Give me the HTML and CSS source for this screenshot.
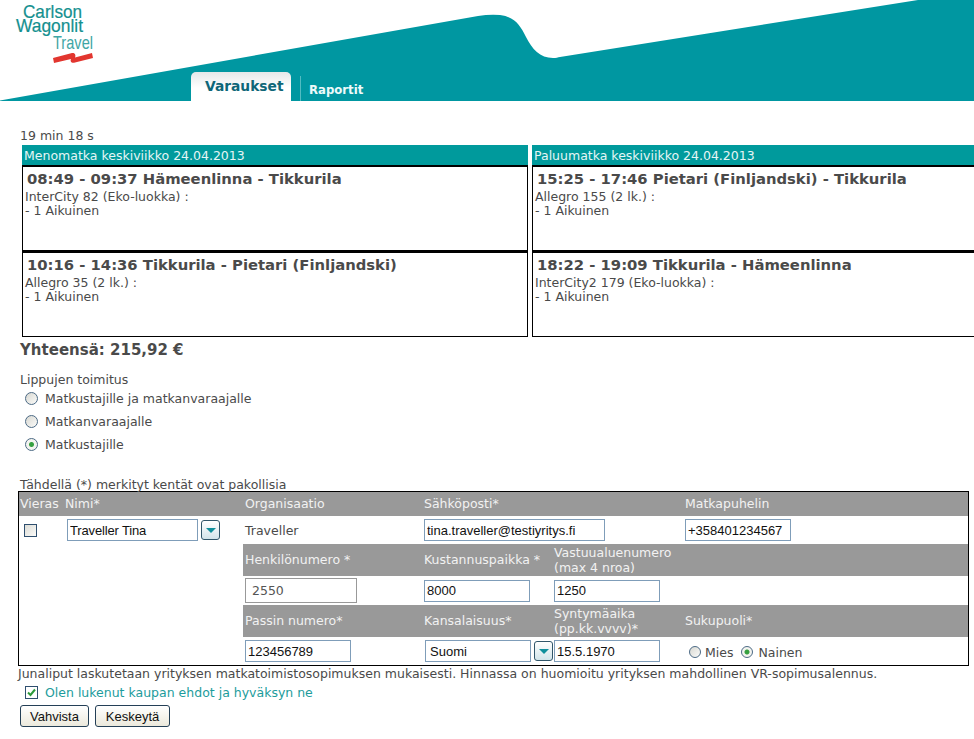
FILE: index.html
```html
<!DOCTYPE html>
<html lang="fi">
<head>
  <meta charset="UTF-8" />
  <title>Varaukset</title>
  <link rel="stylesheet" href="styles.css">
</head>
<body>
  <div class="page">
    <div class="header">
      <svg class="swoosh" width="974" height="101" viewBox="0 0 974 101">
        <path d="M0 100.500 L478 16 Q490 14 500 15 C515 17 520 25 526 37 C532 49 540 58 553 58 C556 58 558 57.500 560 57 L918 0 L974 0 L974 101 L0 101 Z" fill="#0097a1" />
      </svg>
      <svg class="logo" width="191" height="70" viewBox="0 0 191 70">
        <text class="logo-text" x="23" y="18" textLength="59" lengthAdjust="spacingAndGlyphs">Carlson</text>
        <text class="logo-text" x="16" y="32" textLength="67" lengthAdjust="spacingAndGlyphs">Wagonlit</text>
        <text class="logo-text thin" x="53" y="49" textLength="40" lengthAdjust="spacingAndGlyphs">Travel</text>
        <path d="M53 58 L72 53 C75 52.500 76 55 75 57.500 L92 53 L93 58 L75 62.500 C71 63.500 70 61 71 59 L54 63 Z" fill="#e2362f" />
      </svg>
      <div class="tabs">
        <div class="tab-active">Varaukset</div>
        <div class="tab">Raportit</div>
      </div>
    </div>

    <div class="content">
      <div class="timer">19 min 18 s</div>

      <div class="journeys">
        <div class="journey">
          <div class="journey-title">Menomatka keskiviikko 24.04.2013</div>
          <div class="leg">
            <div class="leg-time">08:49 - 09:37 Hämeenlinna - Tikkurila</div>
            <div>InterCity 82 (Eko-luokka) :</div>
            <div>- 1 Aikuinen</div>
          </div>
          <div class="leg">
            <div class="leg-time">10:16 - 14:36 Tikkurila - Pietari (Finljandski)</div>
            <div>Allegro 35 (2 lk.) :</div>
            <div>- 1 Aikuinen</div>
          </div>
        </div>
        <div class="journey">
          <div class="journey-title">Paluumatka keskiviikko 24.04.2013</div>
          <div class="leg">
            <div class="leg-time">15:25 - 17:46 Pietari (Finljandski) - Tikkurila</div>
            <div>Allegro 155 (2 lk.) :</div>
            <div>- 1 Aikuinen</div>
          </div>
          <div class="leg">
            <div class="leg-time">18:22 - 19:09 Tikkurila - Hämeenlinna</div>
            <div>InterCity2 179 (Eko-luokka) :</div>
            <div>- 1 Aikuinen</div>
          </div>
        </div>
      </div>

      <div class="total">Yhteensä: 215,92 €</div>

      <div class="delivery-title">Lippujen toimitus</div>
      <div class="delivery">
        <div class="option"><span class="radio"></span>Matkustajille ja matkanvaraajalle</div>
        <div class="option"><span class="radio"></span>Matkanvaraajalle</div>
        <div class="option"><span class="radio checked"></span>Matkustajille</div>
      </div>

      <div class="required-note">Tähdellä (*) merkityt kentät ovat pakollisia</div>
      <div class="traveller-grid">
        <div class="th">Vieras</div>
        <div class="th name-head">Nimi*</div>
        <div class="th pad">Organisaatio</div>
        <div class="th pad wide">Sähköposti*</div>
        <div class="th pad">Matkapuhelin</div>

        <div class="td"><span class="box guest"></span></div>
        <div class="td pad">
          <div class="combo">
            <input class="field name-field" type="text" value="Traveller Tina" />
            <span class="drop"><span class="arrow"></span></span>
          </div>
        </div>
        <div class="td pad">Traveller</div>
        <div class="td pad wide"><input class="field email-field" type="text" value="tina.traveller@testiyritys.fi" /></div>
        <div class="td pad"><input class="field phone-field" type="text" value="+358401234567" /></div>

        <div class="th pad start">Henkilönumero *</div>
        <div class="th pad">Kustannuspaikka *</div>
        <div class="th pad two-line">Vastuualuenumero<br />(max 4 nroa)</div>
        <div class="th"></div>

        <div class="td pad start"><input class="field readonly-field" type="text" value="2550" /></div>
        <div class="td pad"><input class="field short-field" type="text" value="8000" /></div>
        <div class="td pad"><input class="field short-field" type="text" value="1250" /></div>
        <div class="td"></div>

        <div class="th pad start">Passin numero*</div>
        <div class="th pad">Kansalaisuus*</div>
        <div class="th pad two-line">Syntymäaika<br />(pp.kk.vvvv)*</div>
        <div class="th pad">Sukupuoli*</div>

        <div class="td pad start"><input class="field short-field" type="text" value="123456789" /></div>
        <div class="td pad">
          <div class="combo">
            <input class="field country-field" type="text" value="Suomi" />
            <span class="drop"><span class="arrow"></span></span>
          </div>
        </div>
        <div class="td pad"><input class="field short-field" type="text" value="15.5.1970" /></div>
        <div class="td pad gender">
          <span class="radio"></span><span class="gender-label">Mies</span>
          <span class="radio checked"></span><span>Nainen</span>
        </div>
      </div>

      <div class="invoice-note">Junaliput laskutetaan yrityksen matkatoimistosopimuksen mukaisesti. Hinnassa on huomioitu yrityksen mahdollinen VR-sopimusalennus.</div>
      <div class="terms">
        <span class="box">
          <svg width="11" height="11" viewBox="0 0 11 11"><path d="M2 5.500 L4.500 8 L9 2.500" fill="none" stroke="#2c9a3a" stroke-width="2" /></svg>
        </span>
        <span class="terms-link">Olen lukenut kaupan ehdot ja hyväksyn ne</span>
      </div>
      <div class="actions">
        <button class="btn confirm">Vahvista</button>
        <button class="btn cancel">Keskeytä</button>
      </div>
    </div>
  </div>
</body>
</html>
```

FILE: styles.css
```css
html, body {
  margin: 0;
  padding: 0;
  background: #fff;
}
body {
  font-family: "DejaVu Sans", Verdana, sans-serif;
  font-size: 12.5px;
  color: #4a4a4a;
}
.page {
  width: 974px;
  height: 739px;
  overflow: hidden;
}

/* Header */
.header {
  position: relative;
  height: 101px;
  display: flex;
}
.swoosh {
  position: absolute;
  top: 0;
  left: 0;
}
.logo {
  position: relative;
  flex: none;
}
.logo-text {
  font-family: "Liberation Sans", Arial, sans-serif;
  font-size: 19px;
  fill: #14908f;
  stroke: #14908f;
  stroke-width: 0.2px;
}
.logo-text.thin {
  fill: #3fa6a5;
  stroke: none;
}
.tabs {
  position: relative;
  display: flex;
  align-items: flex-end;
}
.tab-active {
  width: 100px;
  height: 29px;
  box-sizing: border-box;
  padding: 6px 0 0 14px;
  background: linear-gradient(#e4e8e9, #fff 55%);
  border-radius: 5px 5px 0 0;
  color: #0e6678;
  font-size: 13.8px;
  font-weight: bold;
}
.tab {
  height: 25px;
  margin-left: 9px;
  padding: 7px 0 0 8px;
  box-sizing: border-box;
  border-left: 1px solid #52bcc2;
  color: #eefafa;
  font-size: 11.7px;
  font-weight: bold;
}

/* Journeys */
.content {
  padding: 27px 0 0 20px;
}
.timer {
  line-height: 15px;
}
.journeys {
  display: flex;
  gap: 4px;
  margin: 2px 0 0 2px;
}
.journey {
  width: 506px;
  flex: none;
}
.journey-title {
  height: 20px;
  line-height: 22px;
  padding-left: 2px;
  background: #009a9c;
  color: #e6f6f6;
}
.leg {
  height: 86px;
  box-sizing: border-box;
  border: 1px solid #000;
  border-top-width: 2px;
  padding: 3px 2px 0;
  line-height: 14px;
}
.leg-time {
  padding-left: 2px;
  margin-bottom: 2px;
  font-size: 14.8px;
  font-weight: bold;
  line-height: 18px;
}

.total {
  margin-top: 4px;
  font-size: 15px;
  font-weight: bold;
  line-height: 18px;
}

/* Delivery */
.delivery-title {
  margin-top: 13px;
  line-height: 15px;
}
.delivery {
  padding-left: 5px;
}
.option {
  display: flex;
  align-items: center;
  height: 23px;
}
.radio {
  display: inline-block;
  flex: none;
  width: 13px;
  height: 13px;
  box-sizing: border-box;
  margin-right: 7px;
  border: 1px solid #4c6a85;
  border-radius: 50%;
  background: linear-gradient(135deg, #d8d8d2, #fbfbf9);
}
.radio.checked {
  background: radial-gradient(circle, #36a040 0, #36a040 2px, #f4f4f0 3px);
}
.required-note {
  margin-top: 21px;
  line-height: 15px;
}

/* Traveller form */
.traveller-grid {
  display: grid;
  grid-template-columns: 46px 178px 179px 130px 131px 285px;
  grid-template-rows: 24px 28px 32px 29px 32px 28px;
  width: 949px;
  margin: -1px 0 0 -2px;
  border: 1px solid #000;
}
.th {
  display: flex;
  align-items: center;
  padding: 1px 0 0 1px;
  background: #999;
  color: #f2f2f2;
  line-height: 14.600px;
}
.td {
  display: flex;
  align-items: center;
  padding-left: 5px;
}
.th.pad, .td.pad {
  padding-left: 2px;
}
.th.name-head {
  padding-left: 0;
}
.wide {
  grid-column: span 2;
}
.start {
  grid-column: 3;
}
.box {
  display: inline-flex;
  align-items: center;
  justify-content: center;
  width: 13px;
  height: 13px;
  box-sizing: border-box;
  border: 1px solid #2f4f6f;
  background: #fff;
}
.guest {
  background: linear-gradient(135deg, #dcdcd6, #fbfbf9);
}
.field {
  box-sizing: border-box;
  height: 22px;
  padding: 1px 2px;
  border: 1px solid #7f9db9;
  background: #fff;
  font-family: "Liberation Sans", Arial, sans-serif;
  font-size: 13px;
  color: #111;
  outline: none;
}
.name-field {
  width: 131px;
  letter-spacing: -0.15px;
}
.email-field {
  width: 181px;
}
.phone-field {
  width: 106px;
}
.short-field {
  width: 106px;
}
.country-field {
  width: 106px;
  margin-left: 1px;
  padding-left: 4px;
}
.readonly-field {
  width: 112px;
  height: 25px;
  padding-left: 6px;
  border-color: #999;
  font-family: "DejaVu Sans", Verdana, sans-serif;
  font-size: 12.5px;
  color: #555;
}
.combo {
  display: flex;
  align-items: center;
  gap: 3px;
}
.drop {
  display: flex;
  align-items: center;
  justify-content: center;
  width: 19px;
  height: 20px;
  box-sizing: border-box;
  border: 1px solid #31566a;
  border-radius: 3px;
  background: linear-gradient(#fff, #d2e4ea);
}
.arrow {
  width: 0;
  height: 0;
  border-left: 5px solid transparent;
  border-right: 5px solid transparent;
  border-top: 5px solid #0f8f9c;
}
.gender {
  padding-top: 2px;
}
.gender .radio {
  width: 12px;
  height: 12px;
  margin-right: 5px;
}
.gender .radio:first-child {
  margin-left: 4px;
  margin-right: 4px;
}
.gender-label {
  margin-right: 8px;
}

/* Footer */
.invoice-note {
  margin: 0 0 0 -2px;
  padding-top: 1px;
  line-height: 14px;
  white-space: nowrap;
}
.terms {
  display: flex;
  align-items: center;
  height: 23px;
  padding-left: 5px;
}
.terms .box {
  margin-right: 7px;
}
.terms-link {
  color: #1c9c9c;
}
.actions {
  display: flex;
  gap: 6px;
  margin-top: 1px;
}
.btn {
  height: 22px;
  padding: 0;
  border: 1px solid #243f56;
  border-radius: 3px;
  background: linear-gradient(#fff, #ece9dc);
  font-family: "Liberation Sans", Arial, sans-serif;
  font-size: 13px;
  color: #111;
}
.confirm {
  width: 69px;
}
.cancel {
  width: 75px;
}
```
